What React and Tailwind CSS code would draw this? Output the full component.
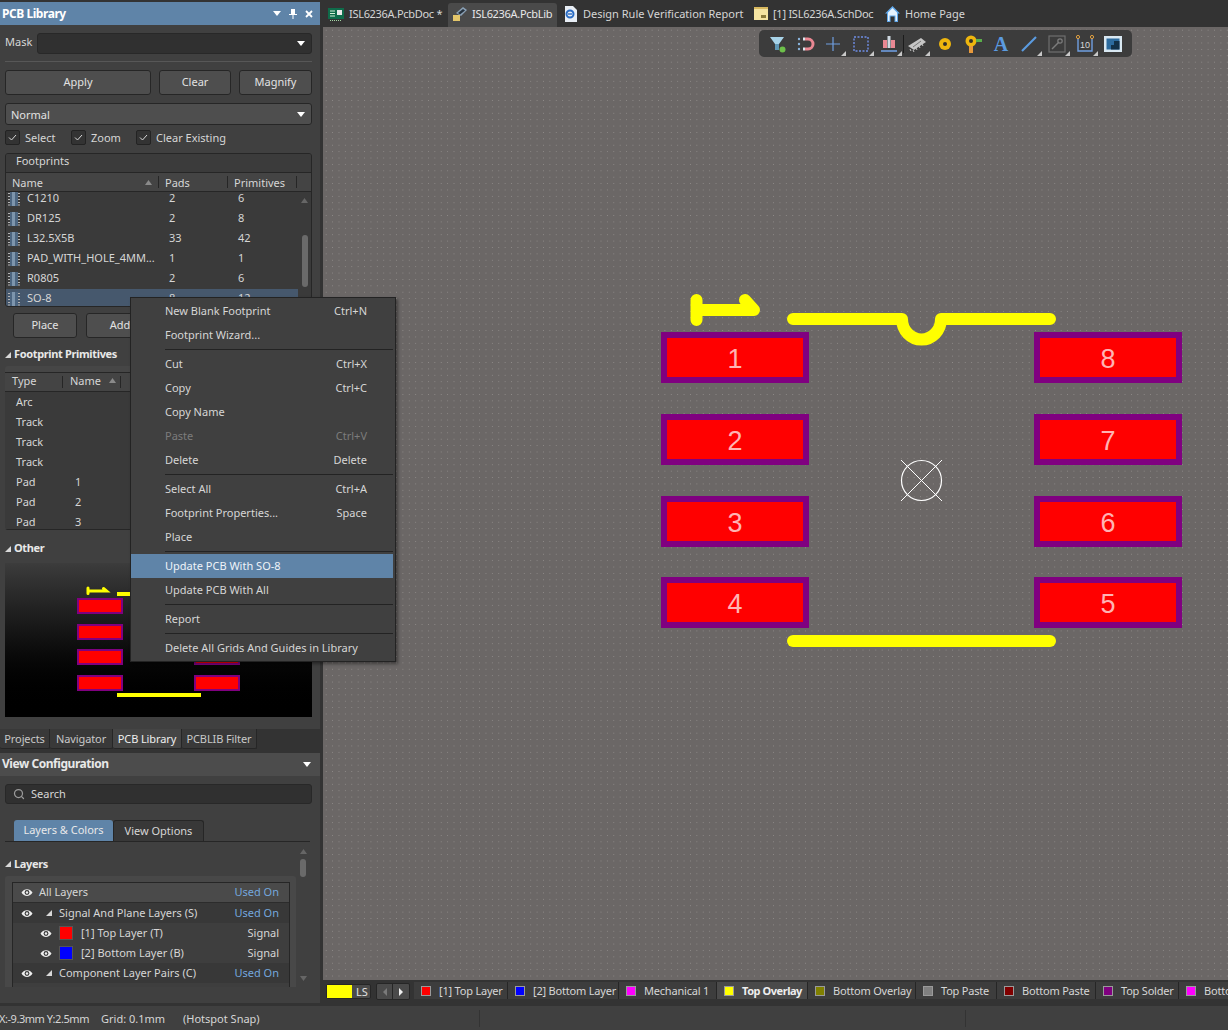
import React from "react";
import { Search } from "lucide-react";

const footprints = [
  ["C1210", "2", "6"],
  ["DR125", "2", "8"],
  ["L32.5X5B", "33", "42"],
  ["PAD_WITH_HOLE_4MM...", "1", "1"],
  ["R0805", "2", "6"],
  ["SO-8", "8", "12"],
];

const primitives = [
  ["Arc", ""],
  ["Track", ""],
  ["Track", ""],
  ["Track", ""],
  ["Pad", "1"],
  ["Pad", "2"],
  ["Pad", "3"],
];

const layerTabs = [
  { name: "[1] Top Layer", swatch: "bg-[#ff0000]", w: "w-[94px]" },
  { name: "[2] Bottom Layer", swatch: "bg-[#0000ff]", w: "w-[111px]" },
  { name: "Mechanical 1", swatch: "bg-[#ff00ff]", w: "w-[98px]" },
  { name: "Top Overlay", swatch: "bg-[#ffff00]", w: "w-[91px]", active: true },
  { name: "Bottom Overlay", swatch: "bg-[#808000]", w: "w-[108px]" },
  { name: "Top Paste", swatch: "bg-[#808080]", w: "w-[81px]" },
  { name: "Bottom Paste", swatch: "bg-[#800000]", w: "w-[99px]" },
  { name: "Top Solder", swatch: "bg-[#800080]", w: "w-[83px]" },
  { name: "Bottom Solder", swatch: "bg-[#ff00ff]", w: "w-[110px]" },
];

const menu = [
  { label: "New Blank Footprint", key: "Ctrl+N" },
  { label: "Footprint Wizard..." },
  { sep: true },
  { label: "Cut", key: "Ctrl+X" },
  { label: "Copy", key: "Ctrl+C" },
  { label: "Copy Name" },
  { label: "Paste", key: "Ctrl+V", disabled: true },
  { label: "Delete", key: "Delete" },
  { sep: true },
  { label: "Select All", key: "Ctrl+A" },
  { label: "Footprint Properties...", key: "Space" },
  { label: "Place" },
  { sep: true },
  { label: "Update PCB With SO-8", active: true },
  { label: "Update PCB With All" },
  { sep: true },
  { label: "Report" },
  { sep: true },
  { label: "Delete All Grids And Guides in Library" },
];

const pads = [
  { n: 1, x: 661, y: 332 },
  { n: 2, x: 661, y: 414 },
  { n: 3, x: 661, y: 496 },
  { n: 4, x: 661, y: 577 },
  { n: 8, x: 1034, y: 332 },
  { n: 7, x: 1034, y: 414 },
  { n: 6, x: 1034, y: 496 },
  { n: 5, x: 1034, y: 577 },
];

function Triangle({ className = "" }) {
  return (
    <svg width="7" height="5" viewBox="0 0 7 5" className={className}>
      <path d="M0 5 L3.5 0 L7 5 Z" fill="currentColor" />
    </svg>
  );
}

function Caret() {
  return (
    <svg width="8" height="5" viewBox="0 0 8 5" className="text-white shrink-0">
      <path d="M0 0 H8 L4 5 Z" fill="currentColor" />
    </svg>
  );
}

function SectionArrow() {
  return (
    <svg width="6" height="6" viewBox="0 0 6 6" className="shrink-0">
      <path d="M6 0 V6 H0 Z" fill="#d8d8d8" />
    </svg>
  );
}

function Eye() {
  return (
    <svg width="12" height="9" viewBox="0 0 12 9">
      <path d="M0.5 4.5 C3 0 9 0 11.5 4.5 C9 9 3 9 0.5 4.5 Z" fill="#eeeeee" />
      <circle cx="6" cy="4.5" r="2.4" fill="#3a3a3a" />
      <circle cx="6" cy="4.5" r="1.2" fill="#eeeeee" />
    </svg>
  );
}

function ChipIcon() {
  return (
    <svg width="12" height="14" viewBox="0 0 12 14" className="shrink-0">
      <rect x="2" y="0" width="8" height="14" fill="#4c6580" />
      <rect x="4" y="0" width="3" height="14" fill="#7d95ad" />
      <path d="M0 1.5 H2 M0 4.5 H2 M0 7.5 H2 M0 10.5 H2 M0 13 H2 M10 1.5 H12 M10 4.5 H12 M10 7.5 H12 M10 10.5 H12 M10 13 H12" stroke="#b4b4b4" strokeWidth="1.2" />
    </svg>
  );
}

function CheckItem({ label, className = "" }) {
  return (
    <div className={`flex items-center gap-[5px] ${className}`}>
      <div className="w-[15px] h-[15px] flex items-center justify-center bg-[#333333] border border-[#232323] rounded-[2px]">
        <svg width="9" height="7" viewBox="0 0 9 7">
          <path d="M1 3.5 L3.5 6 L8 1" stroke="#d8d8d8" strokeWidth="1" fill="none" />
        </svg>
      </div>
      <span>{label}</span>
    </div>
  );
}

function Btn({ children, className = "" }) {
  return (
    <div className={`h-[25px] pb-[2px] flex items-center justify-center bg-[#4e4e4e] border border-[#262626] rounded-[3px] text-[#e2e2e2] ${className}`}>
      {children}
    </div>
  );
}

function ScrollUp({ className = "" }) {
  return <Triangle className={`text-[#666666] ${className}`} />;
}

function PanelTabs() {
  const tabs = [
    { name: "Projects", w: "w-[50px]" },
    { name: "Navigator", w: "w-[63px]" },
    { name: "PCB Library", w: "w-[69px]", active: true },
    { name: "PCBLIB Filter", w: "w-[75px]" },
  ];
  return (
    <div className="flex h-[20px] bg-[#333333]">
      {tabs.map((t) => (
        <div
          key={t.name}
          className={`${t.w} flex items-center justify-center tracking-[-0.1px] border-r border-b border-[#262626] rounded-b-[2px] ${t.active ? "bg-[#454545] text-[#eeeeee]" : "bg-[#393939] text-[#c8c8c8]"}`}
        >
          {t.name}
        </div>
      ))}
    </div>
  );
}

function PcbLibraryPanel() {
  return (
    <div className="h-[704px] bg-[#404040] pl-[5px] pr-[8px] flex flex-col">
      <div className="mt-[8px] h-[21px] flex items-center">
        <span className="w-[32px] pb-[4px]">Mask</span>
        <div className="flex-1 h-[21px] bg-[#303030] border border-[#282828] rounded-[3px] flex items-center justify-end pr-[6px]">
          <Caret />
        </div>
      </div>
      <div className="mt-[7px] h-px bg-[#575757]" />
      <div className="mt-[8px] flex gap-[8px]">
        <Btn className="w-[146px]">Apply</Btn>
        <Btn className="w-[72px]">Clear</Btn>
        <Btn className="w-[73px]">Magnify</Btn>
      </div>
      <div className="mt-[8px] h-[22px] bg-[#4e4e4e] border border-[#262626] rounded-[3px] flex items-center justify-between pl-[5px] pr-[6px] text-[#e2e2e2]">
        <span>Normal</span>
        <Caret />
      </div>
      <div className="mt-[4px] h-[17px] flex items-center">
        <CheckItem label="Select" className="w-[66px]" />
        <CheckItem label="Zoom" className="w-[65px]" />
        <CheckItem label="Clear Existing" />
      </div>

      <div className="mt-[7px] h-[154px] border border-[#262626] rounded-[3px] bg-[#3a3a3a] flex flex-col overflow-hidden">
        <div className="h-[19px] pl-[10px] pb-[5px] flex items-center border-b border-[#262626] bg-[#3b3b3b] shrink-0">Footprints</div>
        <div className="h-[19px] flex items-center bg-[#444444] border-b border-[#262626] shrink-0">
          <div className="w-[153px] pl-[6px] flex items-center justify-between pr-[6px] border-r border-[#262626] h-[12px]">
            <span>Name</span>
            <Triangle className="text-[#8a8a8a]" />
          </div>
          <div className="w-[69px] pl-[6px] h-[12px] flex items-center border-r border-[#262626]">Pads</div>
          <div className="w-[69px] pl-[6px] h-[12px] flex items-center border-r border-[#262626]">Primitives</div>
        </div>
        <div className="flex flex-1 overflow-hidden">
          <div className="w-[292px] -mt-[3px] leading-[10px]">
            {footprints.map(([name, p, q]) => (
              <div key={name} className={`h-[20px] flex items-center pl-[2px] ${name === "SO-8" ? "bg-[#46586d]" : ""}`}>
                <ChipIcon />
                <div className="flex pb-[2px]">
                  <span className="ml-[7px] w-[142px] whitespace-nowrap">{name}</span>
                  <span className="w-[69px]">{p}</span>
                  <span>{q}</span>
                </div>
              </div>
            ))}
          </div>
          <div className="flex-1 flex flex-col items-center pt-[6px]">
            <ScrollUp />
            <div className="mt-[32px] w-[6px] h-[52px] rounded-[3px] bg-[#6a6a6a]" />
          </div>
        </div>
      </div>

      <div className="mt-[6px] ml-[8px] flex gap-[9px]">
        <Btn className="w-[64px]">Place</Btn>
        <Btn className="w-[68px]">Add</Btn>
      </div>

      <div className="mt-[8px] h-[17px] flex items-center gap-[3px] font-bold text-[#e8e8e8] tracking-[-0.35px]">
        <SectionArrow />
        <span className="pb-[2px]">Footprint Primitives</span>
      </div>
      <div className="mt-[3px] h-[164px] bg-[#464646] rounded-[3px] pt-[6px] overflow-hidden">
        <div className="h-[158px] bg-[#3a3a3a] border-b border-[#262626] overflow-hidden">
          <div className="h-[20px] flex items-center bg-[#444444] border-y border-[#262626]">
            <div className="w-[58px] pl-[7px] pb-[3px] h-[12px] flex items-center border-r border-[#262626]">Type</div>
            <div className="w-[58px] pl-[7px] pr-[4px] pb-[3px] h-[12px] flex items-center justify-between border-r border-[#262626]">
              <span>Name</span>
              <Triangle className="text-[#8a8a8a]" />
            </div>
          </div>
          {primitives.map(([type, name], i) => (
            <div key={i} className="h-[20px] pb-[2px] flex items-center pl-[11px]">
              <span className="w-[59px]">{type}</span>
              <span>{name}</span>
            </div>
          ))}
        </div>
      </div>

      <div className="mt-[10px] h-[17px] flex items-center gap-[3px] font-bold text-[#e8e8e8] tracking-[-0.35px]">
        <SectionArrow />
        <span className="pb-[2px]">Other</span>
      </div>
      <div className="mt-[6px] h-[154px] bg-gradient-to-b from-[#3c3c3c] to-[#000000]">
        <svg width="307" height="154" viewBox="5 563 307 154" className="block">
          {[598, 624, 649, 675].map((y) => (
            <g key={y}>
              <rect x="77" y={y} width="46" height="16" fill="#800080" />
              <rect x="79" y={y + 2} width="42" height="12" fill="#ff0000" />
              <rect x="194" y={y} width="46" height="16" fill="#800080" />
              <rect x="196" y={y + 2} width="42" height="12" fill="#ff0000" />
            </g>
          ))}
          <path d="M88 588 V593.5 M88 591 H106.5 L103.5 588.5" stroke="#ffff00" strokeWidth="3" fill="none" strokeLinecap="round" />
          <rect x="117" y="592" width="30" height="4" fill="#ffff00" />
          <rect x="117" y="693" width="84" height="4" fill="#ffff00" />
        </svg>
      </div>
    </div>
  );
}

function LayerRow({ label, right, eyeX, bg, accent, arrow, swatch, border }) {
  return (
    <div className={`h-[20px] flex items-center ${bg} ${border ? "border-b border-[#2c2c2c]" : ""}`}>
      <div className={`${eyeX} shrink-0`}>
        <Eye />
      </div>
      {arrow && (
        <div className="ml-[13px] mr-[7px]">
          <SectionArrow />
        </div>
      )}
      {swatch && <div className={`ml-[7px] mr-[8px] w-[14px] h-[14px] border border-[#555555] shrink-0 ${swatch}`} />}
      <span className={`flex-1 pb-[2px] ${border ? "pb-[1px] -ml-[1px]" : ""}`}>{label}</span>
      <span className={`pr-[10px] pb-[2px] ${border ? "pb-[1px]" : ""} ${accent ? "text-[#74a7dd]" : ""}`}>{right}</span>
    </div>
  );
}

function ViewConfigPanel() {
  return (
    <div className="h-[250px] bg-[#404040] flex flex-col">
      <div className="h-[23px] shrink-0 bg-[#4c4c4c] flex items-center justify-between pl-[2px] pr-[9px] font-bold text-[12px] tracking-[-0.45px] text-[#e8e8e8]">
        <span className="pb-[1px]">View Configuration</span>
        <Caret />
      </div>
      <div className="ml-[5px] mt-[8px] h-[20px] w-[307px] bg-[#303030] border border-[#282828] rounded-[3px] flex items-center pl-[7px] gap-[6px] shrink-0">
        <Search size={12} strokeWidth={2.5} className="text-[#9a9a9a]" />
        <span className="pb-[2px]">Search</span>
      </div>
      <div className="ml-[5px] mt-[16px] w-[305px] h-[22px] flex pl-[9px] border-b border-[#262626] shrink-0">
        <div className="w-[99px] h-[21px] pb-[2px] bg-[#5f84a8] rounded-t-[3px] flex items-center justify-center text-[#e8e8e8]">Layers &amp; Colors</div>
        <div className="w-[91px] h-[21px] pb-[2px] bg-[#383838] border border-b-0 border-[#262626] rounded-t-[3px] flex items-center justify-center">View Options</div>
      </div>
      <div className="flex flex-1 min-h-0">
        <div className="w-[296px] pl-[5px]">
          <div className="mt-[13px] h-[17px] flex items-center gap-[3px] font-bold text-[#e8e8e8] tracking-[-0.35px]">
            <SectionArrow />
            <span>Layers</span>
          </div>
          <div className="mt-[4px] h-[111px] bg-[#484848] rounded-t-[3px] pt-[6px] pl-[7px] pr-[6px] overflow-hidden">
            <div className="border border-[#262626] h-[110px] bg-[#3e3e3e]">
              <LayerRow label="All Layers" right="Used On" accent eyeX="ml-[8px] mr-[7px]" bg="bg-[#4a4a4a]" border />
              <LayerRow label="Signal And Plane Layers (S)" right="Used On" accent arrow eyeX="ml-[8px]" bg="bg-[#383838]" />
              <LayerRow label="[1] Top Layer (T)" right="Signal" swatch="bg-[#ff0000]" eyeX="ml-[27px]" bg="bg-[#3e3e3e]" />
              <LayerRow label="[2] Bottom Layer (B)" right="Signal" swatch="bg-[#0000ff]" eyeX="ml-[27px]" bg="bg-[#3e3e3e]" />
              <LayerRow label="Component Layer Pairs (C)" right="Used On" accent arrow eyeX="ml-[8px]" bg="bg-[#383838]" />
            </div>
          </div>
        </div>
        <div className="flex-1 flex flex-col pl-[4px] pt-[7px]">
          <ScrollUp />
          <div className="mt-[5px] w-[6px] h-[18px] rounded-[3px] bg-[#6a6a6a]" />
          <Triangle className="text-[#666666] mt-[99px] rotate-180" />
        </div>
      </div>
    </div>
  );
}

function DocTabs() {
  return (
    <div className="h-[27px] flex items-end bg-[#333333] shrink-0">
      <div className="w-[125px] h-[24px] pb-[3px] flex items-center pl-[5px] gap-[5px]">
        <svg width="16" height="14" viewBox="0 0 16 14" className="shrink-0">
          <rect x="0" y="1" width="16" height="11" fill="#0f6b4a" />
          <path d="M2 4 H7 M2 6.5 H7 M2 9 H7" stroke="#d5f0d5" strokeWidth="1.2" />
          <rect x="9" y="3" width="5" height="5" fill="#e8e8e8" />
          <path d="M2 13.5 H14" stroke="#a6d8a6" strokeWidth="1" strokeDasharray="1 1" />
        </svg>
        <span className="whitespace-nowrap tracking-[-0.3px]">ISL6236A.PcbDoc *</span>
      </div>
      <div className="w-[109px] h-[24px] pb-[3px] flex items-center pl-[4px] gap-[4px] bg-[#4a4a4a] rounded-t-[3px] text-[#e8e8e8]">
        <svg width="16" height="16" viewBox="0 0 16 16" className="shrink-0">
          <path d="M4 7 L11 1 L15 4 L9 10 Z" fill="#8aa0b5" />
          <path d="M6 7 L11 3 L13 4.5 L8 8.5 Z" fill="#26323e" />
          <rect x="1" y="9" width="7" height="6" fill="#e4c66a" />
        </svg>
        <span className="whitespace-nowrap tracking-[-0.3px]">ISL6236A.PcbLib</span>
      </div>
      <div className="w-[191px] h-[24px] pb-[3px] flex items-center pl-[6px] gap-[5px]">
        <svg width="15" height="16" viewBox="0 0 15 16" className="shrink-0">
          <path d="M2 0 H10 L14 4 V16 H2 Z" fill="#e8eef5" />
          <circle cx="7" cy="8" r="3.5" fill="none" stroke="#2a6cc4" strokeWidth="2" />
          <path d="M5 8 H9" stroke="#2a6cc4" strokeWidth="1.4" />
        </svg>
        <span className="whitespace-nowrap">Design Rule Verification Report</span>
      </div>
      <div className="w-[137px] h-[24px] pb-[3px] flex items-center pl-[6px] gap-[5px]">
        <svg width="14" height="13" viewBox="0 0 14 13" className="shrink-0">
          <rect width="14" height="13" fill="#f4e3a1" />
          <rect width="14" height="2" fill="#d8b85e" />
          <rect x="7" y="8" width="5" height="3" fill="#8a7a3c" />
        </svg>
        <span className="whitespace-nowrap tracking-[-0.25px]">[1] ISL6236A.SchDoc</span>
      </div>
      <div className="flex h-[24px] pb-[3px] items-center gap-[5px]">
        <svg width="15" height="16" viewBox="0 0 15 16" className="shrink-0">
          <path d="M7.5 0 L15 7.5 H13 V16 H9.5 V10.5 H5.5 V16 H2 V7.5 H0 Z" fill="#5fa7ea" />
          <path d="M7.5 2 L12 6.5 V15 H10.5 V9.5 H4.5 V15 H3 V6.5 Z" fill="#e6f2fd" />
        </svg>
        <span className="whitespace-nowrap">Home Page</span>
      </div>
    </div>
  );
}

function ToolIcon({ children, corner }) {
  return (
    <div className="relative w-[28px] h-[27px] flex items-center justify-center">
      <svg width="22" height="20" viewBox="0 0 22 20">
        {children}
      </svg>
      {corner && (
        <svg width="5" height="5" viewBox="0 0 5 5" className="absolute right-[1px] bottom-[1px]">
          <path d="M5 0 V5 H0 Z" fill="#c8c8c8" />
        </svg>
      )}
    </div>
  );
}

function Toolbar() {
  return (
    <div className="absolute left-[436px] top-[3px] h-[27px] w-[373px] pl-[4px] flex bg-[#3c3c3c] rounded-[5px]">
      <ToolIcon>
        <path d="M4 3 H18 L13 10 V16 H9 V10 Z" fill="#a7d3e8" />
        <path d="M9 10 H13 V16 H9 Z" fill="#5f97b5" />
        <circle cx="16.5" cy="15.5" r="3" fill="#6dc04a" />
      </ToolIcon>
      <ToolIcon>
        <path d="M11 5 H14 A5 5 0 0 1 14 15 H11" fill="none" stroke="#e98792" strokeWidth="3" />
        <path d="M9 5 H11 M9 15 H11" stroke="#dce6ee" strokeWidth="3" />
        <circle cx="5" cy="5" r="1.2" fill="#8ab4dc" />
        <circle cx="5" cy="10" r="1.2" fill="#8ab4dc" />
        <circle cx="5" cy="15" r="1.2" fill="#8ab4dc" />
      </ToolIcon>
      <ToolIcon corner>
        <path d="M11 3 V17 M4 10 H18" stroke="#6f9ee0" strokeWidth="1.2" />
      </ToolIcon>
      <ToolIcon corner>
        <rect x="4" y="3" width="14" height="14" fill="none" stroke="#6f8ee6" strokeWidth="1.4" strokeDasharray="2 1.5" />
      </ToolIcon>
      <ToolIcon corner>
        <path d="M5 6 H9 V14 H5 Z M13 6 H17 V14 H13 Z" fill="#e98792" />
        <rect x="9.5" y="2" width="3" height="12" fill="#cfd9e2" />
        <path d="M3 17 H19" stroke="#6f9ee0" strokeWidth="1.6" />
      </ToolIcon>
      <div className="absolute left-[144px] top-[5px] w-px h-[18px] bg-[#1c1c1c]" />
      <ToolIcon corner>
        <path d="M2 12 L15 4 L20 8 L8 16 Z" fill="#c6c6c6" />
        <path d="M7 13 L15 7" stroke="#777777" strokeWidth="1" />
        <path d="M4 15 L5 17 M7 16 L8 18 M10 14 L11 16 M13 12 L14 14 M16 10 L17 12" stroke="#c6c6c6" strokeWidth="1" />
      </ToolIcon>
      <ToolIcon>
        <circle cx="11" cy="10" r="6" fill="#eeb60e" />
        <circle cx="11" cy="10" r="2" fill="#33302a" />
      </ToolIcon>
      <ToolIcon>
        <circle cx="9" cy="7" r="5.5" fill="#eeb60e" />
        <circle cx="9" cy="7" r="2" fill="#33302a" />
        <rect x="14" y="5" width="6" height="3" fill="#5aae4a" />
        <rect x="7" y="12" width="4" height="7" fill="#e89a3c" />
      </ToolIcon>
      <ToolIcon>
        <text x="11" y="17" textAnchor="middle" fontSize="20" fontWeight="700" fontFamily="Liberation Serif, serif" fill="#5b9be0">A</text>
      </ToolIcon>
      <ToolIcon corner>
        <path d="M4 17 L18 3" stroke="#5b9be0" strokeWidth="2.2" />
      </ToolIcon>
      <ToolIcon corner>
        <rect x="3" y="2" width="16" height="16" fill="none" stroke="#6e6e6e" strokeWidth="1.2" />
        <path d="M6 15 L13 8" stroke="#7c7c7c" strokeWidth="1.4" />
        <circle cx="14" cy="7" r="2.2" fill="none" stroke="#7c7c7c" strokeWidth="1.2" />
      </ToolIcon>
      <ToolIcon corner>
        <path d="M4 4 V17 H18 V4" fill="none" stroke="#6f9ee0" strokeWidth="1.4" />
        <circle cx="4" cy="3" r="1.6" fill="none" stroke="#e0a040" />
        <circle cx="18" cy="3" r="1.6" fill="none" stroke="#e0a040" />
        <text x="11" y="14" textAnchor="middle" fontSize="9" fontFamily="Liberation Sans, sans-serif" fill="#d8d8d8">10</text>
      </ToolIcon>
      <ToolIcon>
        <rect x="2" y="2" width="18" height="16" fill="#d9e8f2" />
        <rect x="4.5" y="4.5" width="13" height="11" fill="#2c6b9e" />
        <path d="M9 15.5 V11 H12 V7 H17.5 V15.5 Z" fill="#123148" />
      </ToolIcon>
    </div>
  );
}

function PcbCanvas() {
  return (
    <div className="relative flex-1 bg-[#6b6766] bg-[radial-gradient(circle,#8f8b89_0.6px,transparent_0.8px)] bg-[size:6.4px_6.4px]">
      <svg width="905" height="953" viewBox="323 27 905 953" className="block">
        {pads.map((p) => (
          <g key={p.n}>
            <rect x={p.x} y={p.y} width="148" height="51" fill="#800080" />
            <rect x={p.x + 6} y={p.y + 6} width="136" height="39" fill="#ff0000" />
            <text
              x={p.x + 74}
              y={p.y + 36}
              textAnchor="middle"
              fontSize="27"
              fontFamily="Liberation Sans, sans-serif"
              fill="#ffb3b3"
            >
              {p.n}
            </text>
          </g>
        ))}
        <path d="M793 319 H902 A19.5 20.5 0 0 0 941 319 H1050" fill="none" stroke="#ffff00" strokeWidth="12" strokeLinecap="round" strokeLinejoin="round" />
        <path d="M793 641 H1050" stroke="#ffff00" strokeWidth="12" strokeLinecap="round" />
        <path d="M696.5 300 V320 M696.5 310 H754 L745 300" fill="none" stroke="#ffff00" strokeWidth="12" strokeLinecap="round" strokeLinejoin="round" />
        <circle cx="921.5" cy="480.5" r="20" fill="none" stroke="#ffffff" strokeWidth="1.2" />
        <path d="M901 460 L942 501 M942 460 L901 501" stroke="#ffffff" strokeWidth="1" />
      </svg>
      <Toolbar />
    </div>
  );
}

function LayerBar() {
  return (
    <div className="h-[26px] shrink-0 bg-[#333333] pt-[2px] flex items-start overflow-hidden">
      <div className="ml-[3px] mt-[2px] w-[45px] h-[15px] shrink-0 flex items-center bg-[#4a4a4a] border border-[#262626] rounded-[2px]">
        <div className="w-[25px] h-[13px] bg-[#ffff00]" />
        <span className="ml-[4px] text-[#e2e2e2]">LS</span>
      </div>
      <div className="ml-[5px] mt-[1px] w-[34px] h-[17px] shrink-0 flex bg-[#4a4a4a] border border-[#262626] rounded-[2px]">
        <div className="w-1/2 flex items-center justify-center border-r border-[#262626]">
          <svg width="4" height="8" viewBox="0 0 4 8"><path d="M4 0 V8 L0 4 Z" fill="#7a7a7a" /></svg>
        </div>
        <div className="w-1/2 flex items-center justify-center">
          <svg width="4" height="8" viewBox="0 0 4 8"><path d="M0 0 V8 L4 4 Z" fill="#eeeeee" /></svg>
        </div>
      </div>
      <div className="ml-[4px] flex shrink-0">
        {layerTabs.map((t) => (
          <div
            key={t.name}
            className={`${t.w} shrink-0 h-[17px] flex items-center pl-[7px] gap-[8px] whitespace-nowrap border-r border-[#262626] ${t.active ? "bg-[#4a4a4a] font-bold text-[#eeeeee] tracking-[-0.45px]" : "bg-[#3d3d3d] tracking-[-0.2px]"}`}
          >
            <div className={`w-[10px] h-[10px] border border-[#9a9a9a] shrink-0 ${t.swatch}`} />
            <span>{t.name}</span>
          </div>
        ))}
      </div>
    </div>
  );
}

function ContextMenu() {
  return (
    <div className="absolute left-[130px] top-[297px] w-[266px] bg-[#404040] border border-[#232323] py-[1px] pr-[2px] shadow-[2px_2px_3px_rgba(0,0,0,0.4)] z-10">
      {menu.map((m, i) =>
        m.sep ? (
          <div key={i} className="h-[5px] pl-[34px] flex items-center">
            <div className="h-px w-full bg-[#232323]" />
          </div>
        ) : (
          <div
            key={i}
            className={`h-[24px] pb-[2px] flex items-center justify-between pl-[34px] pr-[26px] whitespace-nowrap ${m.active ? "bg-[#5f84a8] text-[#eef3f8]" : ""} ${m.disabled ? "text-[#7c7c7c]" : ""}`}
          >
            <span>{m.label}</span>
            {m.key && <span>{m.key}</span>}
          </div>
        )
      )}
    </div>
  );
}

export default function App() {
  return (
    <div className="relative w-[1228px] h-[1030px] overflow-hidden bg-[#333333] text-[11px] leading-none text-[#d6d6d6] [font-family:'Noto_Sans',sans-serif]">
      <div className="flex h-[1006px]">
        <div className="w-[320px] shrink-0 pt-[2px]">
          <div className="h-[23px] bg-[#5f84a8] flex items-center pl-[2px] pr-[7px] font-bold text-[12px] tracking-[-0.45px] text-white">
            <span className="flex-1">PCB Library</span>
            <div className="flex items-center gap-[8px]">
              <Caret />
              <svg width="8" height="10" viewBox="0 0 8 10">
                <path d="M2 0 H6 V5 H8 V6 H4.5 V10 H3.5 V6 H0 V5 H2 Z" fill="#ffffff" />
              </svg>
              <svg width="8" height="8" viewBox="0 0 8 8">
                <path d="M1 1 L7 7 M7 1 L1 7" stroke="#ffffff" strokeWidth="1.8" />
              </svg>
            </div>
          </div>
          <PcbLibraryPanel />
          <PanelTabs />
          <div className="h-[4px]" />
          <ViewConfigPanel />
        </div>
        <div className="flex-1 ml-[3px] flex flex-col min-w-0">
          <DocTabs />
          <PcbCanvas />
          <LayerBar />
        </div>
      </div>
      <div className="h-[24px] bg-[#404040] flex items-center">
        <span className="w-[102px] -ml-px shrink-0 tracking-[-0.45px] whitespace-nowrap">X:-9.3mm Y:2.5mm</span>
        <span className="w-[82px] shrink-0">Grid: 0.1mm</span>
        <span className="w-[296px] shrink-0">(Hotspot Snap)</span>
        <div className="w-px h-[17px] bg-[#333333]" />
        <div className="w-[485px]" />
        <div className="w-px h-[17px] bg-[#333333]" />
      </div>
      <ContextMenu />
    </div>
  );
}
